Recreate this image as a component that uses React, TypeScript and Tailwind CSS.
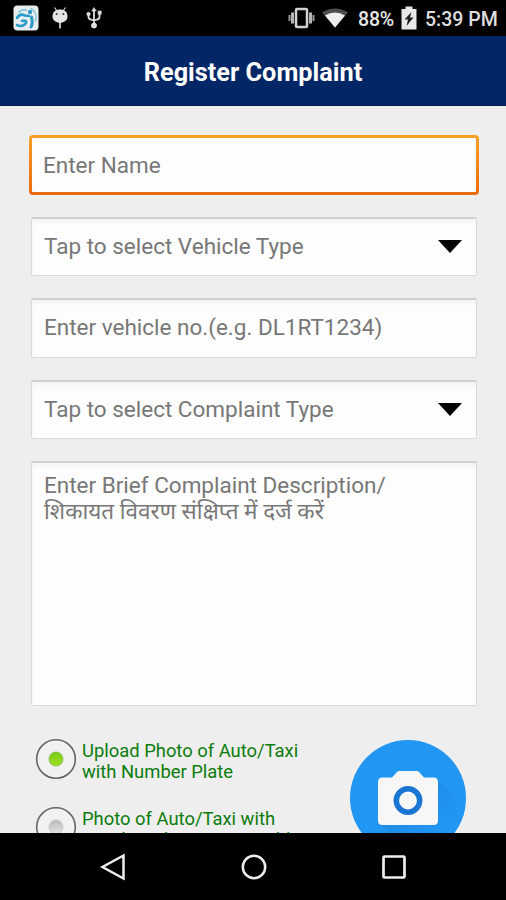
import type { ReactNode } from "react"

function Logo() {
    return (
        <svg width="26" height="26" viewBox="0 0 26 26">
            <rect x="0.5" y="0.5" width="25" height="25" rx="4" fill="#e9eef0" />
            <g fill="none" stroke="#2b9cc9" strokeLinecap="round">
                <path d="M6 7C8 5 11 4.500 13 5" strokeWidth="2" stroke="#8ac6de" />
                <path d="M4 13C6 9.500 9 9 12 10.500L16 11" strokeWidth="2.6" />
                <path d="M4 20C7 22 11 21 13 18C14 16 12 15 9 16" strokeWidth="2.6" />
                <path d="M18 22C20 19 19.500 16 18.500 12" strokeWidth="3" />
                <path d="M18 3.500C22.500 6 24 11 22.500 16" strokeWidth="1.6" stroke="#8ac6de" />
            </g>
            <circle cx="17" cy="7" r="2.2" fill="#2b9cc9" />
        </svg>
    )
}

function Android() {
    return (
        <svg width="18" height="22" viewBox="0 0 18 22">
            <path d="M3.5 0.500L6 4M14.5 0.500L12 4" stroke="#d4d4d4" strokeWidth="1.2" />
            <path d="M1.500 9.500C1.500 5 4.500 2.500 9 2.500C13.500 2.500 16.500 5 16.500 9.500C16.500 13.500 13 15.500 9 16C5 15.500 1.500 13.500 1.500 9.500Z" fill="#e4e4e4" />
            <path d="M9 15V21.500" stroke="#e4e4e4" strokeWidth="1.6" />
            <circle cx="5.600" cy="6.900" r="1" fill="#333" />
            <circle cx="12.400" cy="6.900" r="1" fill="#333" />
        </svg>
    )
}

function Usb() {
    return (
        <svg width="16" height="22" viewBox="0 0 16 22" fill="#dedede" stroke="#dedede">
            <path d="M8 3V18M2.500 7V10Q2.500 12 5 12.500L8 13.500L11 12.500Q13.500 12 13.500 10V6" fill="none" strokeWidth="1.800" />
            <path d="M8 0.500L10.300 4H5.700Z" strokeWidth="0.500" />
            <circle cx="2.500" cy="7" r="1.800" strokeWidth="0.500" />
            <rect x="12" y="4" width="3.200" height="3.200" strokeWidth="0.500" />
            <circle cx="8" cy="18.500" r="2.500" />
        </svg>
    )
}

function StatusBar() {
    return (
        <div className="flex h-9 shrink-0 items-center bg-black pr-[7px] pl-[13px]">
            <Logo />
            <div className="ml-[12px]"><Android /></div>
            <div className="ml-[17px]"><Usb /></div>

            <svg className="ml-auto" width="28" height="22" viewBox="0 0 28 22">
                <rect x="8" y="2" width="11" height="18" rx="1" fill="none" stroke="#d2d2d2" strokeWidth="2.500" />
                <path d="M4.500 5.500V16.500M22.500 5.500V16.500" stroke="#b5b5b5" strokeWidth="3" />
                <path d="M1.500 8V14M25.500 8V14" stroke="#9b9b9b" strokeWidth="2" />
            </svg>
            <svg className="ml-[5px]" width="28" height="22" viewBox="0 0 28 22">
                <path d="M14 20.500L1 5.500Q14 -2.500 27 5.500Z" fill="#4d4d4d" />
                <path d="M14 20.500L4 8.500Q14 2.500 24 8.500Z" fill="#eeeeee" />
            </svg>
            <span className="ml-[9px] w-[37px] pt-[3px] text-[19.500px] font-medium tracking-[-0.2px] whitespace-nowrap text-[#e8e8e8]">88%</span>
            <svg className="ml-[6px]" width="16" height="24" viewBox="0 0 16 24">
                <path d="M4.500 0.500H11.500V3H15.500V23.500H0.500V3H4.500Z" fill="#e8e8e8" />
                <path d="M10.500 6L3.500 13.500H7L5.500 20L12.500 11.500H9Z" fill="#222" />
            </svg>
            <span className="ml-[8px] w-[74px] pt-[3px] text-[19.500px] font-medium whitespace-nowrap text-[#dedede]">5:39 PM</span>
        </div>
    )
}

function Field({ children, dropdown }: { children: ReactNode; dropdown?: boolean }) {
    return (
        <div className="flex h-[59.5px] items-center justify-between rounded-[2px] border border-t-2 border-[#d9d9d9] border-t-[#d0d0d0] bg-[#fdfdfd] pr-[14px] pl-[12.5px] text-[22.500px] text-[#777] shadow-[inset_0_3px_4px_#f3f3f3]">
            <span className="whitespace-nowrap">{children}</span>
            {dropdown && (
                <svg width="24" height="13" viewBox="0 0 24 13">
                    <path d="M0 0H24L12 13Z" fill="#000" />
                </svg>
            )}
        </div>
    )
}

function Radio({ checked, children }: { checked?: boolean; children: ReactNode }) {
    return (
        <div className="flex h-[42px] items-start">
            <svg className="shrink-0" width="42" height="42" viewBox="0 0 42 42">
                <defs>
                    <linearGradient id="on" x1="0" y1="0" x2="0" y2="1">
                        <stop stopColor="#79ca18" />
                        <stop offset="1" stopColor="#9ee01f" />
                    </linearGradient>
                    <linearGradient id="off" x1="0" y1="0" x2="0" y2="1">
                        <stop stopColor="#b9b9b9" />
                        <stop offset="1" stopColor="#e5e5e5" />
                    </linearGradient>
                </defs>
                <circle cx="21" cy="21" r="19.300" fill="#f1f1f1" stroke="#666" strokeWidth="1.600" />
                <circle cx="21" cy="21" r="7" fill={checked ? "url(#on)" : "url(#off)"} stroke={checked ? "#83b64a" : "#c5c5c5"} strokeWidth="0.800" />
            </svg>
            <p className="ml-[5px] pt-[2px] text-[18.400px] leading-[21px] whitespace-nowrap text-[#0c7c0c]">{children}</p>
        </div>
    )
}

function Camera() {
    return (
        <svg className="h-[118px] w-[118px] shrink-0" viewBox="0 0 118 118">
            <defs>
                <clipPath id="disc"><circle cx="59" cy="59" r="58" /></clipPath>
                <linearGradient id="shade" x1="0" y1="0" x2="1" y2="1">
                    <stop offset="0.200" stopColor="#1f88e2" />
                    <stop offset="0.650" stopColor="#2196f3" />
                </linearGradient>
            </defs>
            <circle cx="59" cy="59" r="58" fill="#2196f3" />
            <path clipPath="url(#disc)" d="M87 39L118 70V118H60L31 84Z" fill="url(#shade)" />
            <path d="M33.500 38.500H43L48 33Q49 32 50.500 32H67.500Q69 32 70 33L75 38.500H84.500Q89 38.500 89 43V81.500Q89 86 84.500 86H33.500Q29 86 29 81.500V43Q29 38.500 33.500 38.500Z" fill="#f7f7f7" />
            <circle cx="59" cy="61.500" r="11.700" fill="#f7f7f7" stroke="#1976d2" strokeWidth="5.500" />
        </svg>
    )
}

function NavBar() {
    return (
        <div className="flex h-[67px] shrink-0 items-center justify-between bg-black pr-[98px] pl-[99px]">
            <svg width="28" height="28" viewBox="0 0 28 28" fill="none" stroke="#eee" strokeWidth="2.500">
                <path d="M24.500 2.500V25.500L3.500 14Z" />
            </svg>
            <svg width="28" height="28" viewBox="0 0 28 28" fill="none" stroke="#eee" strokeWidth="2.500">
                <circle cx="14" cy="14" r="11.200" />
            </svg>
            <svg width="28" height="28" viewBox="0 0 28 28" fill="none" stroke="#eee" strokeWidth="2.700">
                <rect x="3.500" y="3.500" width="21" height="21" rx="1" />
            </svg>
        </div>
    )
}

export default function App() {
    return (
        <div className="flex h-[900px] w-[506px] flex-col overflow-hidden bg-[#eeeeee] font-[Roboto,'Noto_Sans',sans-serif]">
            <StatusBar />
            <header className="flex h-[70px] shrink-0 items-center justify-center border-b border-[#071b50] bg-[#032766] pt-[4px]">
                <h1 className="text-[25.300px] font-bold whitespace-nowrap text-white">Register Complaint</h1>
            </header>

            <main className="min-h-0 flex-1 overflow-hidden pt-[29px]">
                <div className="mr-[27.5px] ml-[29px] h-[60px] rounded-[4px] bg-linear-to-b from-[#f99f27] to-[#e9690f] p-[3px]">
                    <div className="flex h-full items-center rounded-[1px] bg-[#fdfdfd] pt-px pl-[11px] text-[22.500px] text-[#777]">Enter Name</div>
                </div>

                <div className="mr-[29.5px] ml-[30.5px] mt-[21.5px] flex flex-col gap-[22px]">
                    <Field dropdown>Tap to select Vehicle Type</Field>
                    <Field>Enter vehicle no.(e.g. DL1RT1234)</Field>
                    <Field dropdown>Tap to select Complaint Type</Field>
                    <div className="h-[245px] rounded-[2px] border border-t-2 border-[#d9d9d9] border-t-[#d0d0d0] bg-[#fdfdfd] pt-[9px] pl-[12.5px] text-[22.500px] leading-[26px] whitespace-nowrap text-[#777] shadow-[inset_0_3px_4px_#f3f3f3]">
                        <p>Enter Brief Complaint Description/</p>
                        <p>शिकायत विवरण संक्षिप्त में दर्ज करें</p>
                    </div>
                </div>

                <div className="mt-[32.5px] flex items-start justify-between pr-[39px] pl-[35px]">
                    <div className="-mt-[0.5px] flex flex-col gap-[25.5px]">
                        <Radio checked>Upload Photo of Auto/Taxi<br />with Number Plate</Radio>
                        <Radio>Photo of Auto/Taxi with<br />Number Plate is not visible</Radio>
                    </div>
                    <Camera />
                </div>
            </main>

            <NavBar />
        </div>
    )
}
